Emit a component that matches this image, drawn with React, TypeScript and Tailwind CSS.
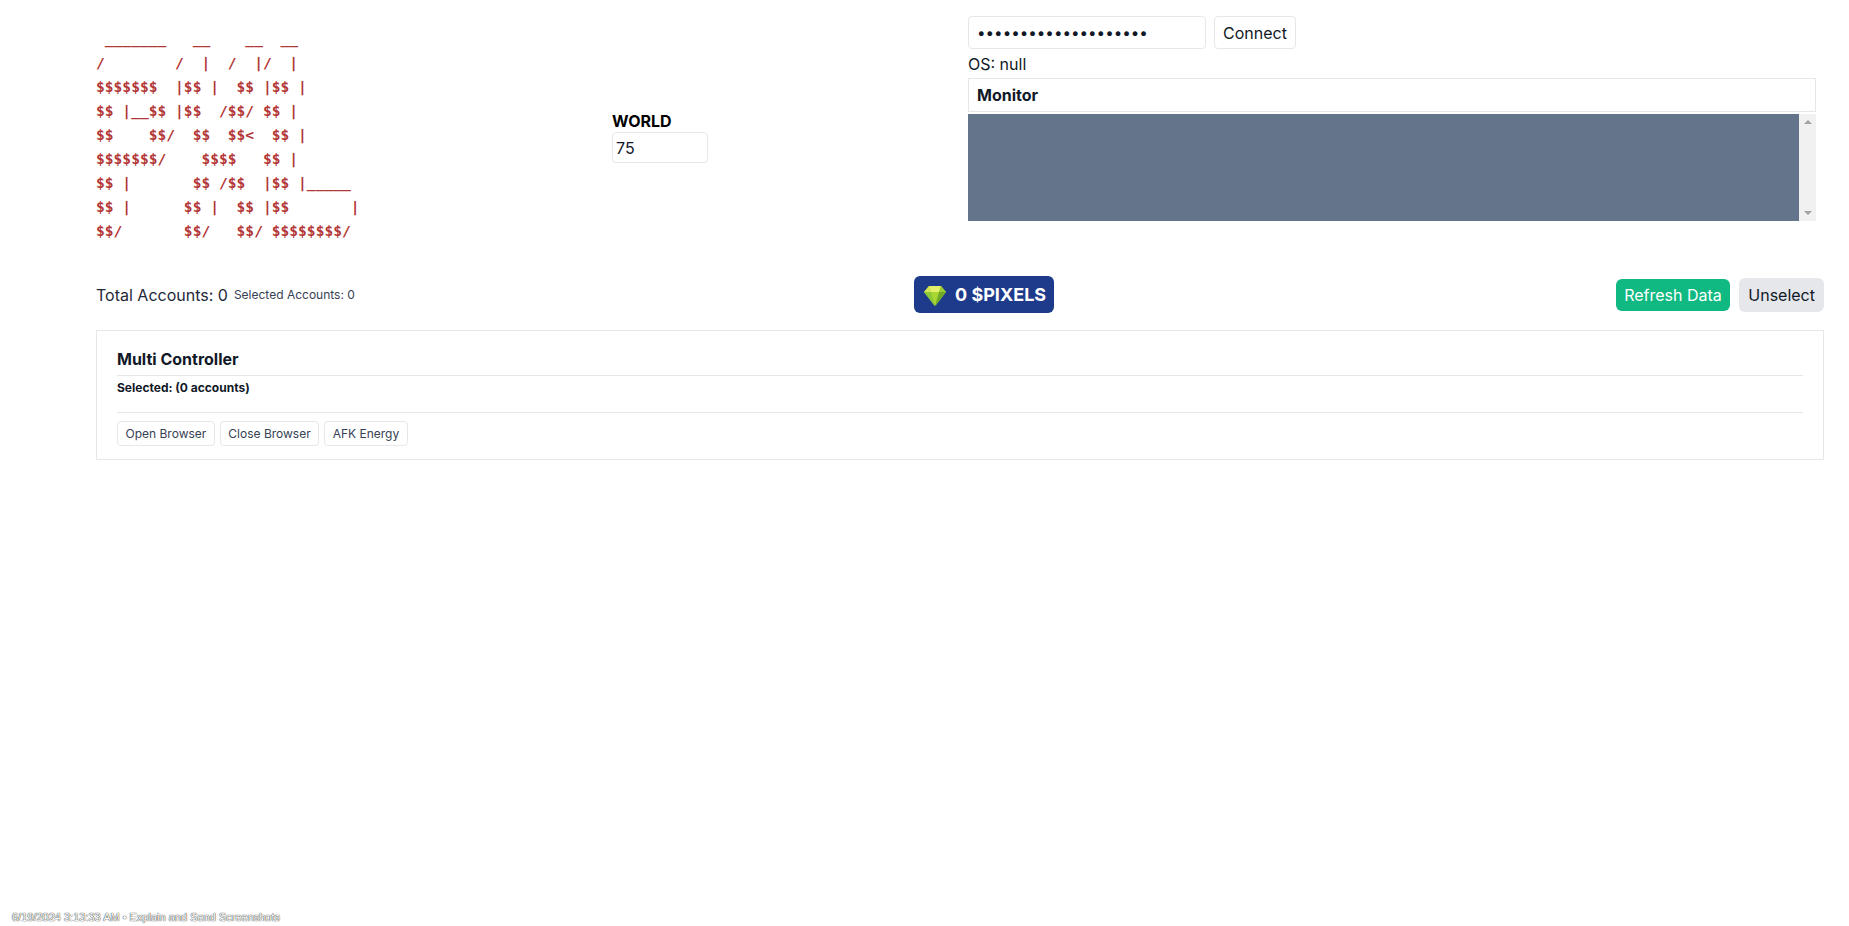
const ART = [
  ' _______   __    __  __',
  '/        /  |  /  |/  |',
  '$$$$$$$  |$$ |  $$ |$$ |',
  '$$ |__$$ |$$  /$$/ $$ |',
  '$$    $$/  $$  $$<  $$ |',
  '$$$$$$$/    $$$$   $$ |',
  '$$ |       $$ /$$  |$$ |_____',
  '$$ |      $$ |  $$ |$$       |',
  '$$/       $$/   $$/ $$$$$$$$/',
];

function Gem() {
  return (
    <svg width="24" height="24" viewBox="0 0 24 24" className="shrink-0">
      <path d="M6 3 H18 L23 9 L13 22 Q12 23 11 22 L1 9 Z" fill="#a9d62f" />
      <path d="M6 3 H18 L16 9 H8 Z" fill="#e3ee6a" />
      <path d="M1 9 H8 L12 23 Z" fill="#8cc63a" />
      <path d="M16 9 H23 L12 23 Z" fill="#6fa92a" />
      <path d="M6 3 L8 9 H1 Z" fill="#cfe651" />
      <path d="M18 3 L23 9 H16 Z" fill="#98cb30" />
    </svg>
  );
}

function SmallButton({ label }: { label: string }) {
  return (
    <button className="h-[25px] px-[7.5px] rounded border border-gray-200 bg-white text-xs text-gray-700">{label}</button>
  );
}

export default function App() {
  return (
    <div className="relative h-screen bg-white text-[#111827] overflow-hidden font-['Inter',sans-serif]">
      <div className="pl-24 pr-[25px]">
        <div className="flex h-[259px]">
          <div className="w-[516px] pt-[27px]">
            {ART.map((line, i) => (
              <div key={i} className="h-6 leading-6 whitespace-pre font-['DejaVu_Sans_Mono',monospace] font-bold text-[14.6px] text-[#b33636]">
                {line}
              </div>
            ))}
          </div>
          <div className="w-[356px] pt-[110px]">
            <div className="text-base font-bold leading-[22px] text-black">WORLD</div>
            <input
              readOnly
              value="75"
              className="w-[96px] h-[31px] px-[3px] rounded border border-gray-200 text-base outline-none"
            />
          </div>
          <div className="flex-1 pt-4 mr-[8px]">
            <div className="flex gap-2">
              <input
                readOnly
                type="password"
                value="12345678901234567890"
                className="w-[238px] h-[33px] px-2 rounded border border-gray-200 text-[15.2px] outline-none"
              />
              <button className="h-[33px] px-2 rounded border border-gray-200 text-base">Connect</button>
            </div>
            <div className="h-[29px] leading-[30px] text-base">OS: null</div>
            <div className="h-[34px] px-2 border border-gray-200 text-base font-bold leading-[33px]">Monitor</div>
            <div className="mt-0.5 flex h-[107px]">
              <div className="flex-1 bg-[#64748b]" />
              <div className="flex w-[17px] flex-col items-center justify-between bg-[#f1f1f1] py-1.5">
                <div className="h-0 w-0 border-x-4 border-b-4 border-x-transparent border-b-[#a3a3a3]" />
                <div className="h-0 w-0 border-x-4 border-t-4 border-x-transparent border-t-[#a3a3a3]" />
              </div>
            </div>
          </div>
        </div>

        <div className="relative flex h-[71px] items-start justify-between pt-[18px]">
          <div className="flex items-center gap-[6px] h-[36px]">
            <span className="text-base text-gray-800">Total Accounts: 0</span>
            <span className="text-xs text-gray-700">Selected Accounts: 0</span>
          </div>
          <div className="absolute left-[818px] top-[17px] flex h-[37px] w-[140px] items-center gap-[8px] rounded-md bg-[#1e3a8a] pl-[9px] text-lg font-bold text-white">
            <Gem />
            <span>0 $PIXELS</span>
          </div>
          <div className="flex items-center gap-[9px] h-[36px]">
            <button className="h-8 px-[8.5px] rounded-md bg-[#10b981] text-base text-white">Refresh Data</button>
            <button className="h-[34px] px-[9px] rounded-md bg-gray-200 text-base text-gray-900">Unselect</button>
          </div>
        </div>

        <div className="border border-gray-200 px-5 pt-4 h-[130px]">
          <div className="h-[29px] text-base font-bold leading-6 border-b border-gray-200">Multi Controller</div>
          <div className="h-[37px] pt-[2px] text-xs font-bold leading-5 border-b border-gray-200">Selected: (0 accounts)</div>
          <div className="flex gap-[5px] mt-2">
            <SmallButton label="Open Browser" />
            <SmallButton label="Close Browser" />
            <SmallButton label="AFK Energy" />
          </div>
        </div>
      </div>

      <div className="absolute left-3 bottom-[1px] text-[11px] text-white [text-shadow:0_0_1px_#333,0_0_1px_#333] font-['Liberation_Sans',sans-serif]">
        6/19/2024 3:13:33 AM • Explain and Send Screenshots
      </div>
    </div>
  );
}
